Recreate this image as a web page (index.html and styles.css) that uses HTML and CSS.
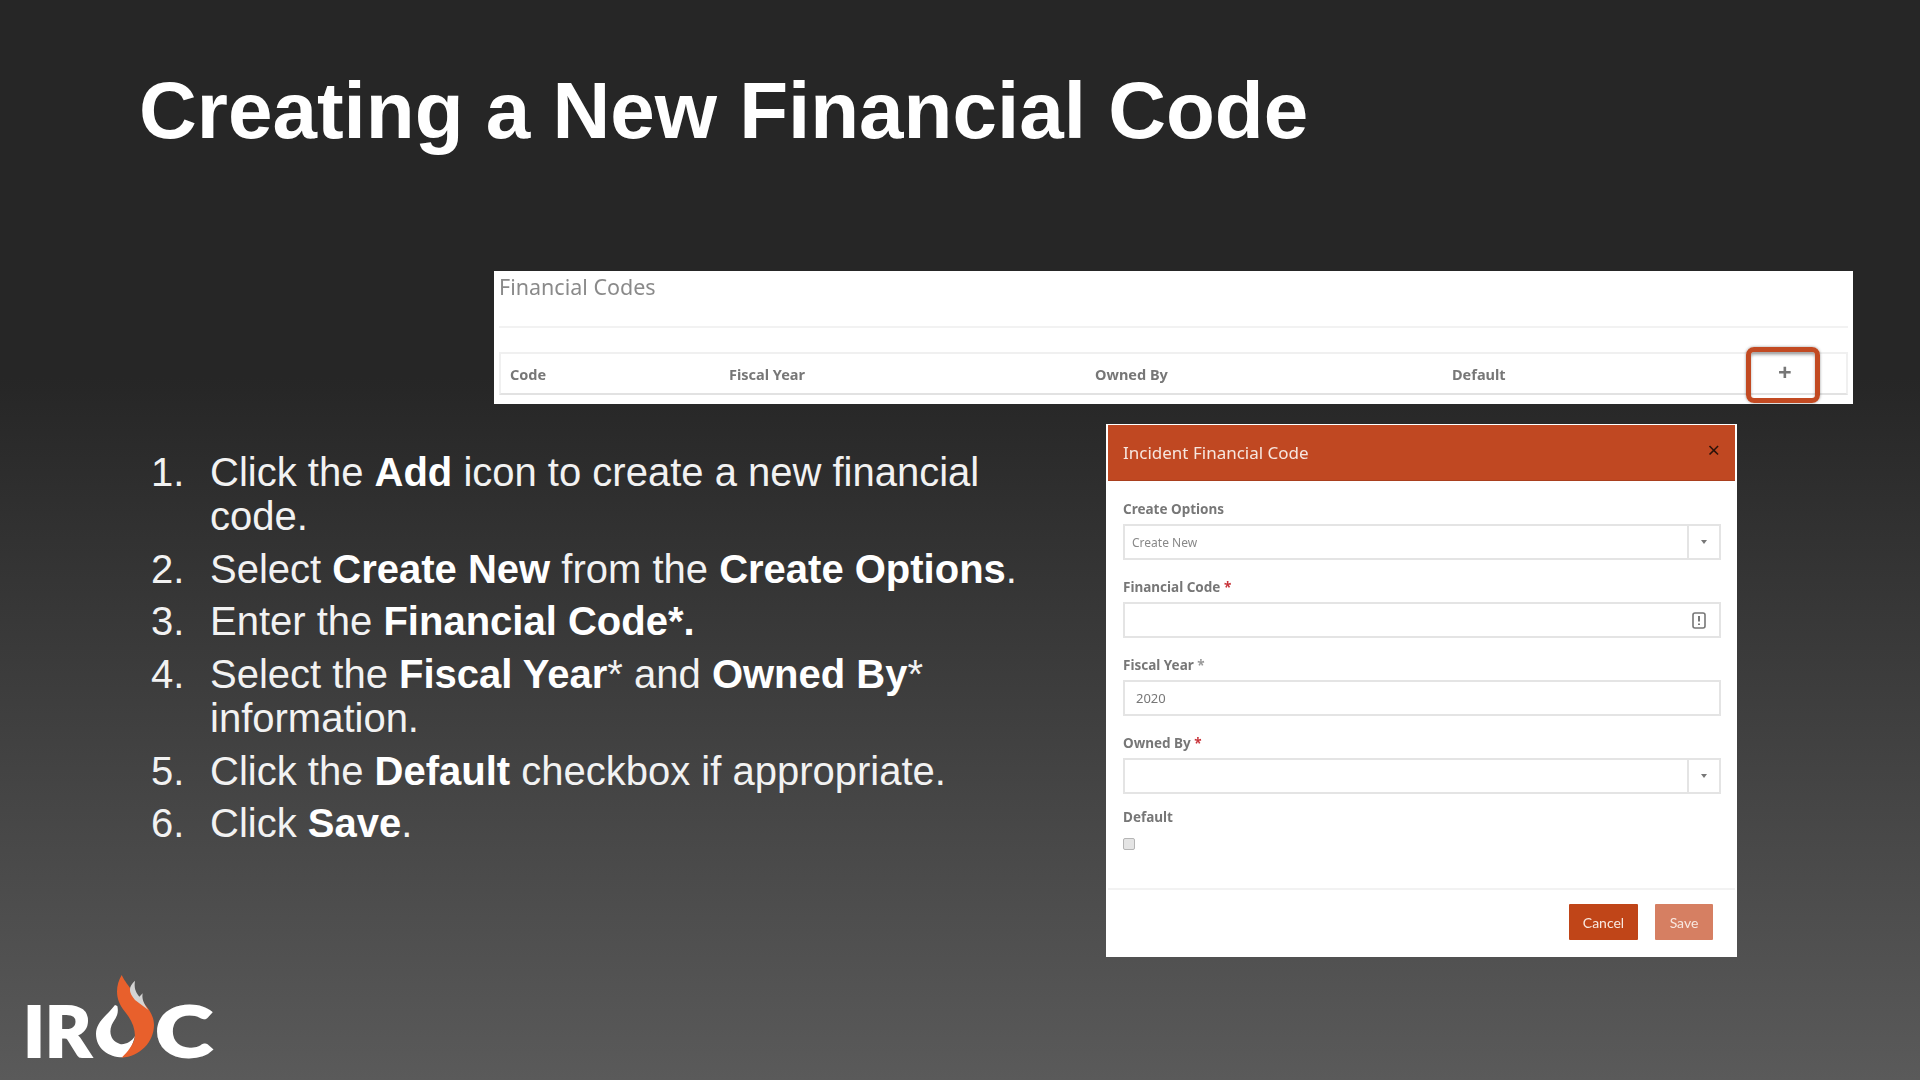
FILE: index.html
```html
<!DOCTYPE html>
<html lang="en">
<head>
  <meta charset="UTF-8" />
  <title>Creating a New Financial Code</title>
  <link rel="stylesheet" href="styles.css">
</head>
<body>
  <div class="slide">
    <h1>Creating a New Financial Code</h1>

    <div class="codes-panel">
      <div class="codes-title">Financial Codes</div>
      <div class="codes-head">
        <span>Code</span>
        <span>Fiscal Year</span>
        <span>Owned By</span>
        <span>Default</span>
        <span class="plus">+</span>
      </div>
      <div class="callout"></div>
    </div>

    <div class="content-row">
      <div class="left-col">
        <ol class="steps">
          <li><span>Click the <b>Add</b> icon to create a new financial code.</span></li>
          <li><span>Select <b>Create New</b> from the <b>Create Options</b>.</span></li>
          <li><span>Enter the <b>Financial Code*.</b></span></li>
          <li><span>Select the <b>Fiscal Year</b>* and <b>Owned By</b>* information.</span></li>
          <li><span>Click the <b>Default</b> checkbox if appropriate.</span></li>
          <li><span>Click <b>Save</b>.</span></li>
        </ol>

        <svg class="logo" viewBox="0 0 780 390" width="260" height="130">
          <text x="70" y="320" class="logo-text">IR</text>
          <text x="466" y="320" class="logo-text" textLength="172" lengthAdjust="spacingAndGlyphs">C</text>
          <path fill="#ffffff" d="M345 165 C320 198 288 215 288 252 C288 295 325 322 368 322 C385 310 397 290 405 258 C395 275 375 285 360 282 C335 275 325 250 335 225 C345 205 358 195 352 168 Z" />
          <path fill="#e8602c" d="M365 75 C345 110 345 150 375 185 C400 215 410 250 402 272 C392 295 378 310 365 323 C420 320 462 275 462 225 C462 180 420 150 395 120 C380 100 372 90 365 75 Z" />
          <path fill="#d4d4d4" d="M405 92 C385 110 385 125 405 150 L445 180 C430 160 425 145 428 130 L418 140 C405 125 402 110 405 92 Z" />
        </svg>
      </div>

      <div class="modal">
        <div class="modal-header">
          <span>Incident Financial Code</span>
          <span class="modal-close">×</span>
        </div>
        <div class="modal-body">
          <div class="field">
            <label>Create Options</label>
            <div class="input">
              <span class="input-value">Create New</span>
              <span class="caret"></span>
            </div>
          </div>
          <div class="field">
            <label>Financial Code <em>*</em></label>
            <div class="input">
              <span class="input-value"></span>
              <svg class="alert-icon" viewBox="0 0 14 17" width="14" height="17">
                <rect x="1" y="1" width="12" height="15" rx="2" fill="none" stroke="#777" stroke-width="1.6" />
                <path d="M7 4 V9.5 M7 11.5 V13" stroke="#777" stroke-width="2" />
              </svg>
            </div>
          </div>
          <div class="field">
            <label>Fiscal Year <em class="muted">*</em></label>
            <div class="input">
              <span class="input-value year">2020</span>
            </div>
          </div>
          <div class="field">
            <label>Owned By <em>*</em></label>
            <div class="input">
              <span class="input-value"></span>
              <span class="caret"></span>
            </div>
          </div>
          <div class="field field-check">
            <label>Default</label>
            <div class="checkbox"></div>
          </div>
        </div>
        <div class="modal-footer">
          <button class="btn">Cancel</button>
          <button class="btn btn-light">Save</button>
        </div>
      </div>
    </div>
  </div>
</body>
</html>
```

FILE: styles.css
```css
html, body {
  margin: 0;
  padding: 0;
}

.slide {
  width: 1920px;
  height: 1080px;
  overflow: hidden;
  display: flex;
  flex-direction: column;
  background: linear-gradient(to bottom, #262626 0%, #262626 35%, #5a5a5a 100%);
  font-family: "Liberation Sans", Arial, sans-serif;
  color: white;
}

h1 {
  margin: 0;
  padding: 62px 0 0 139px;
  height: 271px;
  box-sizing: border-box;
  font-size: 80px;
  line-height: 98px;
  font-weight: bold;
}

.codes-panel {
  position: relative;
  margin-left: 494px;
  width: 1359px;
  height: 133px;
  box-sizing: border-box;
  padding: 0 5px;
  background: white;
  font-family: "Noto Sans", sans-serif;
  color: #777;
  filter: blur(0.5px);
}

.codes-title {
  height: 57px;
  padding-top: 1px;
  box-sizing: border-box;
  border-bottom: 2px solid #f2f2f2;
  font-size: 21.5px;
  line-height: 30px;
  color: #8a8a8a;
}

.codes-head {
  display: grid;
  grid-template-columns: 219px 366px 357px 1fr 68px;
  align-items: center;
  margin-top: 24px;
  height: 43px;
  box-sizing: border-box;
  padding-left: 9px;
  border: 2px solid #f0f0f0;
  border-bottom-color: #e2e2e2;
  font-size: 14.5px;
  font-weight: bold;
}

.plus {
  margin-top: -4px;
  font-size: 24px;
  line-height: 22px;
}

.callout {
  position: absolute;
  left: 1252px;
  top: 76px;
  width: 74px;
  height: 56px;
  box-sizing: border-box;
  border: 5px solid #c24a22;
  border-radius: 8px;
  box-shadow: 0 0 3px rgba(0, 0, 0, 0.4), inset 0 3px 3px rgba(0, 0, 0, 0.3);
}

.content-row {
  flex: 1;
  display: flex;
  margin-top: 20px;
}

.left-col {
  width: 1106px;
  display: flex;
  flex-direction: column;
}

.steps {
  list-style: none;
  counter-reset: step;
  margin: 26px 0 0 151px;
  padding: 0;
  width: 880px;
  font-size: 40px;
  line-height: 44px;
  color: #f2f2f2;
}

.steps li {
  display: flex;
  counter-increment: step;
  margin-bottom: 8.7px;
}

.steps li::before {
  content: counter(step) ".";
  flex: 0 0 59px;
}

.steps b {
  color: white;
}

.logo {
  display: block;
  margin-top: auto;
}

.logo-text {
  font-family: Lato, sans-serif;
  font-weight: 900;
  font-size: 214px;
  fill: white;
  stroke: white;
  stroke-width: 6px;
}

.modal {
  width: 631px;
  height: 533px;
  box-sizing: border-box;
  padding: 1px 2px 0;
  background: white;
  font-family: "Noto Sans", sans-serif;
  color: #777;
  filter: blur(0.5px);
}

.modal-header {
  display: flex;
  justify-content: space-between;
  height: 56px;
  box-sizing: border-box;
  padding: 14px 15px 0 15px;
  background: #c04822;
  border-bottom: 1px solid #a93f1e;
  font-size: 17px;
  line-height: 28px;
  color: #f6e6df;
}

.modal-close {
  margin-top: -1px;
  color: #2a120a;
  font-size: 22px;
  line-height: 22px;
}

.modal-body {
  display: flex;
  flex-direction: column;
  gap: 16px;
  padding: 17px 14px 38px 15px;
  border-bottom: 2px solid #f2f2f2;
}

.field label {
  display: block;
  height: 22px;
  margin-bottom: 4px;
  font-size: 13.5px;
  line-height: 22px;
  font-weight: bold;
}

.field em {
  font-style: normal;
  color: #c8343a;
}

.field em.muted {
  color: #999;
}

.input {
  display: flex;
  align-items: center;
  height: 36px;
  box-sizing: border-box;
  border: 2px solid #e4e4e4;
}

.input-value {
  flex: 1;
  padding-left: 7px;
  font-size: 12px;
  color: #888;
}

.input-value.year {
  padding-left: 11px;
  font-size: 13px;
  color: #777;
}

.caret {
  position: relative;
  width: 32px;
  height: 100%;
  border-left: 2px solid #e4e4e4;
  box-sizing: border-box;
}

.caret::after {
  content: "";
  position: absolute;
  left: 12px;
  top: 14px;
  border: 3px solid transparent;
  border-top: 4px solid #777;
}

.alert-icon {
  margin-right: 13px;
}

.field-check {
  margin-top: -4px;
}

.checkbox {
  width: 12px;
  height: 12px;
  margin-top: 10px;
  box-sizing: border-box;
  border: 1px solid #b5b5b5;
  border-radius: 2px;
  background: #e4e4e4;
}

.modal-footer {
  display: flex;
  justify-content: flex-end;
  gap: 17px;
  padding: 14px 22px 0 0;
}

.btn {
  width: 69px;
  height: 36px;
  padding: 0;
  border: none;
  border-radius: 1px;
  background: #c04518;
  font-family: "Lato", sans-serif;
  font-size: 14px;
  color: #f8e8e0;
}

.btn-light {
  width: 58px;
  background: #d67f62;
}
```
